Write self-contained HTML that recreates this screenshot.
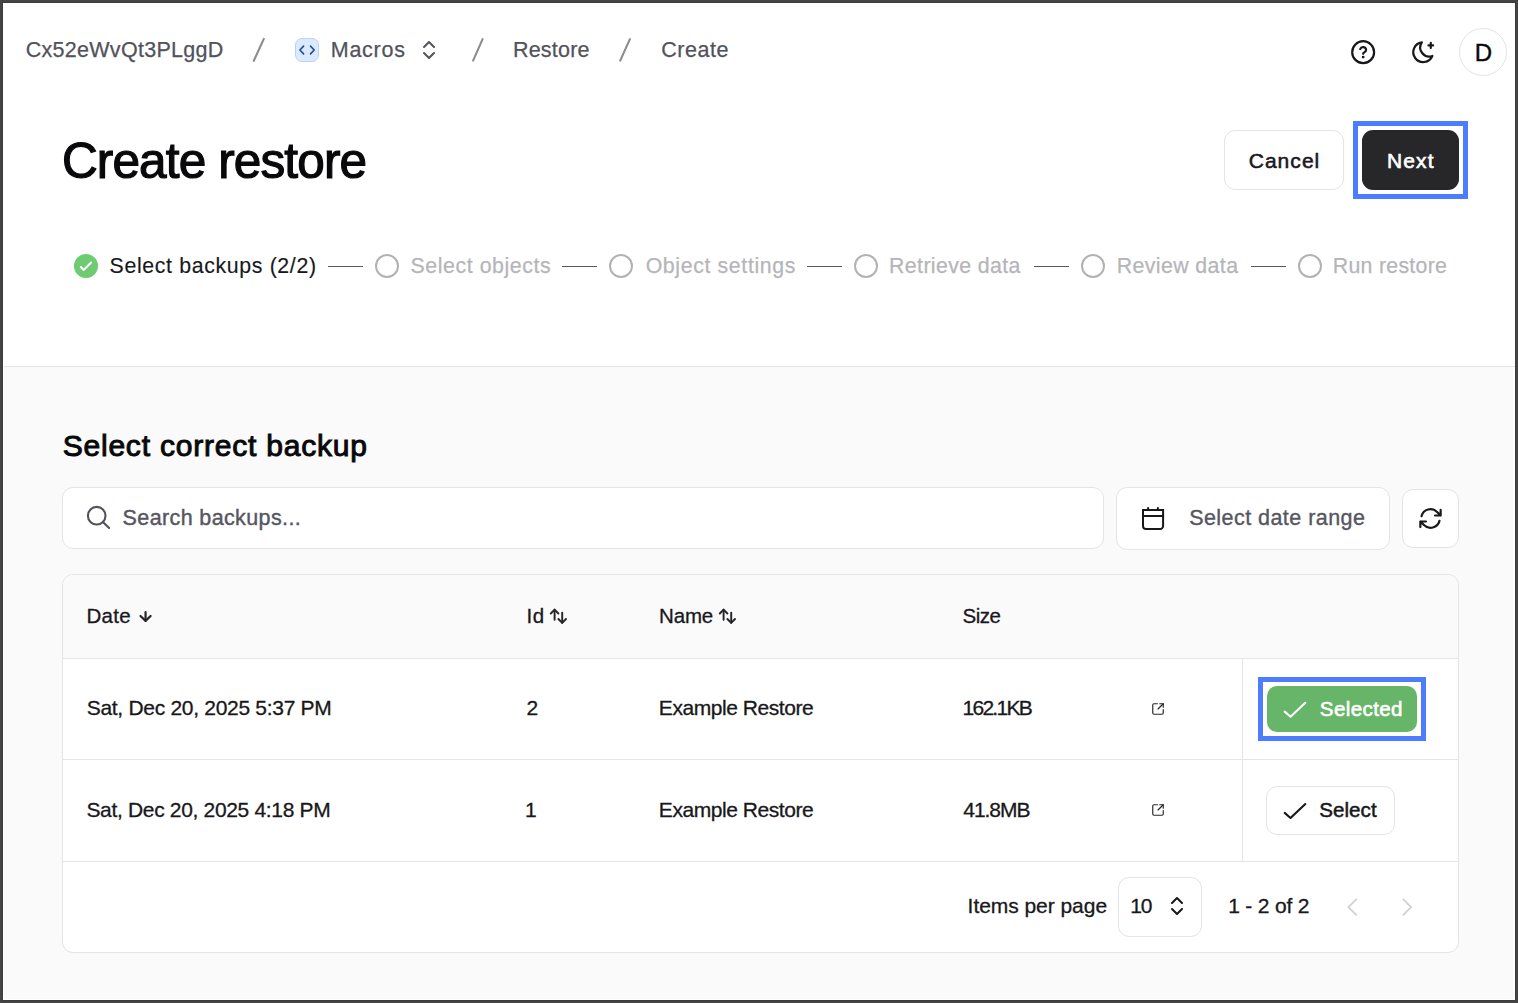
<!DOCTYPE html>
<html lang="en">
<head>
<meta charset="utf-8">
<title>Create restore</title>
<style>
*{box-sizing:border-box;margin:0;padding:0}
html,body{width:1518px;height:1003px;overflow:hidden;background:#444}
body{font-family:"Liberation Sans",sans-serif;-webkit-font-smoothing:antialiased}
#page{position:relative;width:1518px;height:1003px;background:#444;overflow:hidden}
#page>*,.grp>*{position:absolute}
.grp{display:contents}
.t{white-space:nowrap;line-height:1;font-weight:400}
#frame{left:2px;top:2px;width:1514px;height:999px;background:#fff;border:1px solid #3c3c3c}
#top{left:3px;top:3px;width:1512px;height:363px;background:#fff}
#sep{left:4px;top:366px;width:1511px;height:1px;background:#e4e4e7}
#main{left:4px;top:367px;width:1510px;height:632px;background:#fafafa}
.box{background:#fff;border:1px solid #e4e4e7;border-radius:11px}
svg{overflow:visible}
.ic{fill:none;stroke-linecap:round;stroke-linejoin:round}
.ring{border:5px solid #4d7cfe;background:transparent}
.ln{height:1px;background:#5a5a60}

#bc1{left:25.70px;top:40.00px;font-size:21.5px;color:#52525b;letter-spacing:0.286px;-webkit-text-stroke:0.25px #52525b;}
#bc2{left:330.78px;top:40.00px;font-size:21.5px;color:#52525b;letter-spacing:0.731px;-webkit-text-stroke:0.25px #52525b;}
#bc3{left:512.98px;top:40.00px;font-size:21.5px;color:#52525b;letter-spacing:0.211px;-webkit-text-stroke:0.25px #52525b;}
#bc4{left:661.30px;top:40.00px;font-size:21.5px;color:#52525b;letter-spacing:0.543px;-webkit-text-stroke:0.25px #52525b;}
#av{left:1474.83px;top:41.02px;font-size:24px;color:#09090b;letter-spacing:0.000px;-webkit-text-stroke:0.4px #09090b;}
#title{left:61.90px;top:136.00px;font-size:49.5px;color:#09090b;letter-spacing:-0.861px;-webkit-text-stroke:1.2px #09090b;}
#cancel{left:1248.70px;top:150.01px;font-size:21px;color:#18181b;letter-spacing:1.045px;-webkit-text-stroke:0.55px #18181b;}
#next{left:1386.88px;top:150.01px;font-size:21px;color:#ffffff;letter-spacing:1.191px;-webkit-text-stroke:0.6px #ffffff;}
#s1{left:109.56px;top:256.01px;font-size:21.3px;color:#18181b;letter-spacing:0.649px;-webkit-text-stroke:0.15px #18181b;}
#s2{left:410.50px;top:256.01px;font-size:21.3px;color:#b5b5b9;letter-spacing:0.584px;-webkit-text-stroke:0.25px #b5b5b9;}
#s3{left:645.68px;top:256.01px;font-size:21.3px;color:#b5b5b9;letter-spacing:0.635px;-webkit-text-stroke:0.25px #b5b5b9;}
#s4{left:889.06px;top:256.01px;font-size:21.3px;color:#b5b5b9;letter-spacing:0.396px;-webkit-text-stroke:0.25px #b5b5b9;}
#s5{left:1116.68px;top:256.01px;font-size:21.3px;color:#b5b5b9;letter-spacing:0.414px;-webkit-text-stroke:0.25px #b5b5b9;}
#s6{left:1332.78px;top:256.01px;font-size:21.3px;color:#b5b5b9;letter-spacing:0.286px;-webkit-text-stroke:0.25px #b5b5b9;}
#h2{left:62.68px;top:431.00px;font-size:30px;color:#09090b;letter-spacing:0.789px;-webkit-text-stroke:1.0px #09090b;}
#ph{left:122.58px;top:508.00px;font-size:21.5px;color:#56565f;letter-spacing:0.377px;-webkit-text-stroke:0.4px #56565f;}
#dr{left:1189.18px;top:508.00px;font-size:21.5px;color:#56565e;letter-spacing:0.451px;-webkit-text-stroke:0.35px #56565e;}
#th1{left:86.38px;top:606.01px;font-size:20.5px;color:#18181b;letter-spacing:0.316px;-webkit-text-stroke:0.3px #18181b;}
#th2{left:526.60px;top:606.01px;font-size:20.5px;color:#18181b;letter-spacing:0.371px;-webkit-text-stroke:0.3px #18181b;}
#th3{left:659.12px;top:606.01px;font-size:20.5px;color:#18181b;letter-spacing:-0.182px;-webkit-text-stroke:0.3px #18181b;}
#th4{left:962.56px;top:606.01px;font-size:20.5px;color:#18181b;letter-spacing:-0.517px;-webkit-text-stroke:0.3px #18181b;}
#r1a{left:86.70px;top:697.00px;font-size:21px;color:#18181b;letter-spacing:-0.294px;-webkit-text-stroke:0.3px #18181b;}
#r1b{left:526.43px;top:697.00px;font-size:21px;color:#18181b;letter-spacing:0.000px;-webkit-text-stroke:0.3px #18181b;}
#r1c{left:658.84px;top:697.00px;font-size:21px;color:#18181b;letter-spacing:-0.441px;-webkit-text-stroke:0.3px #18181b;}
#r1d{left:962.50px;top:697.00px;font-size:21px;color:#18181b;letter-spacing:-1.733px;-webkit-text-stroke:0.3px #18181b;}
#sel1{left:1319.84px;top:699.02px;font-size:20.6px;color:#ffffff;letter-spacing:0.361px;-webkit-text-stroke:0.6px #ffffff;}
#r2a{left:86.38px;top:799.00px;font-size:21px;color:#18181b;letter-spacing:-0.325px;-webkit-text-stroke:0.3px #18181b;}
#r2b{left:525.03px;top:799.00px;font-size:21px;color:#18181b;letter-spacing:0.000px;-webkit-text-stroke:0.3px #18181b;}
#r2c{left:658.84px;top:799.00px;font-size:21px;color:#18181b;letter-spacing:-0.441px;-webkit-text-stroke:0.3px #18181b;}
#r2d{left:963.30px;top:799.00px;font-size:21px;color:#18181b;letter-spacing:-1.039px;-webkit-text-stroke:0.3px #18181b;}
#sel2{left:1319.20px;top:800.00px;font-size:20.6px;color:#18181b;letter-spacing:0.050px;-webkit-text-stroke:0.5px #18181b;}
#f1{left:967.60px;top:895.01px;font-size:21px;color:#18181b;letter-spacing:-0.047px;-webkit-text-stroke:0.3px #18181b;}
#f2{left:1130.32px;top:895.01px;font-size:21px;color:#18181b;letter-spacing:-1.259px;-webkit-text-stroke:0.3px #18181b;}
#f3{left:1228.24px;top:895.01px;font-size:21px;color:#18181b;letter-spacing:-0.199px;-webkit-text-stroke:0.3px #18181b;}
</style>
</head>
<body>
<div id="page">
<div id="frame"></div>
<header id="top"></header>
<div id="sep"></div>
<main id="main"></main>
<nav class="grp" id="g-bc" aria-label="Breadcrumb">
<svg class="ic" style="left:250px;top:36px" width="18" height="28" viewBox="250 36 18 28" stroke="#8c8c8e" stroke-width="2.1" stroke-linecap="butt"><path d="M263.8 38.9 253.8 60.8"/></svg>
<div id="badge" style="left:295px;top:38px;width:24px;height:24px;border-radius:7px;background:#dbeafe;border:1px solid #b6d2fc"></div>
<svg class="ic" style="left:295px;top:38px" width="24" height="24" viewBox="295 38 24 24" stroke="#1f4b99" stroke-width="1.6" stroke-linecap="butt" stroke-linejoin="miter"><path d="M303.6 46.1 299.9 50l3.7 3.9"/><path d="M310.5 46.1 314.2 50l-3.7 3.9"/></svg>
<svg class="ic" style="left:417px;top:37.6px" width="24" height="24" viewBox="0 0 24 24" stroke="#52525b" stroke-width="2"><path d="m7 15 5 5 5-5"/><path d="m7 9 5-5 5 5"/></svg>
<svg class="ic" style="left:469px;top:36px" width="18" height="28" viewBox="469 36 18 28" stroke="#8c8c8e" stroke-width="2.1" stroke-linecap="butt"><path d="M482.6 39.1 473.1 60.6"/></svg>
<svg class="ic" style="left:616px;top:36px" width="18" height="28" viewBox="616 36 18 28" stroke="#8c8c8e" stroke-width="2.1" stroke-linecap="butt"><path d="M629.9 39.1 620.2 60.6"/></svg>
<span class="t" id="bc1">Cx52eWvQt3PLggD</span>
<span class="t" id="bc2">Macros</span>
<span class="t" id="bc3">Restore</span>
<span class="t" id="bc4">Create</span>
</nav>
<div class="grp" id="g-tr" aria-label="User menu">
<svg class="ic" style="left:1349.85px;top:38.8px" width="26.3" height="26.3" viewBox="0 0 24 24" stroke="#18181b" stroke-width="2"><circle cx="12" cy="12" r="10"/><path d="M9.3 9.2a2.8 2.8 0 0 1 5.4.9c0 1.9-2.7 2.3-2.7 3.4"/><path d="M12 16.5h.01" stroke-width="2.6"/></svg>
<svg class="ic" style="left:1409.8px;top:38.8px" width="26.4" height="26.4" viewBox="0 0 24 24" stroke="#18181b" stroke-width="2"><path d="M10.8 3.08A8.2 8.2 0 0 0 20.313 15.446A9 9 0 1 1 10.8 3.08z"/><path d="M18.9 3.6v4.5"/><path d="M21 5.85h-4.2"/></svg>
<div id="avatar" style="left:1458.7px;top:27.8px;width:48px;height:48px;border-radius:50%;border:1px solid #e4e4e7;background:#fff"></div>
<span class="t" id="av">D</span>
</div>
<div class="grp" id="g-hd" aria-label="Page header">
<div class="box" id="btn-cancel" style="left:1224px;top:130px;width:120px;height:60px"></div>
<div class="ring" style="left:1353px;top:121px;width:115px;height:78px"></div>
<div id="btn-next" style="left:1362px;top:130px;width:97px;height:60px;border-radius:11px;background:#27272a"></div>
<h1 class="t" id="title">Create restore</h1>
<span class="t" id="cancel">Cancel</span>
<span class="t" id="next">Next</span>
</div>
<div class="grp" id="g-st" role="list" aria-label="Steps">
<div style="left:74px;top:254px;width:24px;height:24px;border-radius:50%;background:#6ecb72"></div>
<svg class="ic" style="left:74px;top:254px" width="24" height="24" viewBox="74 254 24 24" stroke="#fff" stroke-width="2.1" stroke-linecap="butt" stroke-linejoin="miter"><path d="M80.9 267.1 83.6 269.9 91.1 262.5"/></svg>
<div class="ln" style="left:328px;top:266px;width:35px"></div>
<svg class="ic" style="left:375.0px;top:254px" width="24" height="24" viewBox="0 0 24 24" stroke="#b2b2b5" stroke-width="2"><circle cx="12" cy="12" r="11"/></svg>
<div class="ln" style="left:562px;top:266px;width:35px"></div>
<svg class="ic" style="left:609.0px;top:254px" width="24" height="24" viewBox="0 0 24 24" stroke="#b2b2b5" stroke-width="2"><circle cx="12" cy="12" r="11"/></svg>
<div class="ln" style="left:807px;top:266px;width:35px"></div>
<svg class="ic" style="left:854.0px;top:254px" width="24" height="24" viewBox="0 0 24 24" stroke="#b2b2b5" stroke-width="2"><circle cx="12" cy="12" r="11"/></svg>
<div class="ln" style="left:1034px;top:266px;width:35px"></div>
<svg class="ic" style="left:1081.0px;top:254px" width="24" height="24" viewBox="0 0 24 24" stroke="#b2b2b5" stroke-width="2"><circle cx="12" cy="12" r="11"/></svg>
<div class="ln" style="left:1251px;top:266px;width:35px"></div>
<svg class="ic" style="left:1298.0px;top:254px" width="24" height="24" viewBox="0 0 24 24" stroke="#b2b2b5" stroke-width="2"><circle cx="12" cy="12" r="11"/></svg>
<span class="t" id="s1">Select backups (2/2)</span>
<span class="t" id="s2">Select objects</span>
<span class="t" id="s3">Object settings</span>
<span class="t" id="s4">Retrieve data</span>
<span class="t" id="s5">Review data</span>
<span class="t" id="s6">Run restore</span>
</div>
<section class="grp" id="g-sr" aria-label="Filters">
<div class="box" id="search" style="left:62px;top:487px;width:1042px;height:62px"></div>
<svg class="ic" style="left:84px;top:503px" width="28" height="28" viewBox="84 503 28 28" stroke="#52525a" stroke-width="2.1"><circle cx="96.7" cy="515.7" r="8.8"/><path d="M102.9 521.9 109.1 528.1"/></svg>
<div class="box" id="daterange" style="left:1116px;top:487px;width:274px;height:63px"></div>
<svg class="ic" style="left:1139px;top:504px" width="28" height="28" viewBox="1139 504 28 28" stroke="#18181b" stroke-width="2"><path d="M1143 510H1163.1V526a3 3 0 0 1-3 3H1146a3 3 0 0 1-3-3Z" stroke-linejoin="miter"/><path d="M1143 516H1163.1"/><path d="M1148.1 508V510"/><path d="M1157.9 508V510"/></svg>
<div class="box" id="refresh" style="left:1402px;top:489px;width:57px;height:59px;border-radius:11px"></div>
<svg class="ic" style="left:1416.5px;top:505px" width="27" height="27" viewBox="0 0 24 24" stroke="#18181b" stroke-width="1.95"><path d="M16.023 9.348h4.992v-.001M2.985 19.644v-4.992m0 0h4.992m-4.993 0 3.181 3.183a8.25 8.25 0 0 0 13.803-3.7M4.031 9.865a8.25 8.25 0 0 1 13.803-3.7l3.181 3.182m0-4.991v4.99"/></svg>
<h2 class="t" id="h2">Select correct backup</h2>
<span class="t" id="ph">Search backups...</span>
<span class="t" id="dr">Select date range</span>
</section>
<section class="grp" id="g-tb" aria-label="Backups">
<div id="table" style="left:62px;top:574px;width:1396.5px;height:378.5px;border:1px solid #e4e4e7;border-radius:11px;background:#fff;overflow:hidden">
  <div style="position:absolute;left:0;top:0;width:100%;height:84px;background:#fafafa;border-bottom:1px solid #e4e4e7"></div>
  <div style="position:absolute;left:0;top:184px;width:100%;height:1px;background:#e4e4e7"></div>
  <div style="position:absolute;left:0;top:286px;width:100%;height:1px;background:#e4e4e7"></div>
  <div style="position:absolute;left:1179px;top:84px;width:1px;height:202px;background:#e4e4e7"></div>
</div>
<svg class="ic" style="left:136px;top:606px" width="20" height="20" viewBox="136 606 20 20" stroke="#27272a" stroke-width="2.2"><path d="M145.55 612.1V620.7"/><path d="M140.5 616 145.55 620.9 150.6 616"/></svg>
<svg class="ic" style="left:548px;top:606px" width="22" height="20" viewBox="548 606 22 20" stroke="#27272a" stroke-width="1.95"><path d="M550.8 613.5 554.6 609.6l3.8 3.9"/><path d="M554.6 609.8V619.8"/><path d="M558.4 619 562.2 622.9l3.8-3.9"/><path d="M562.2 622.7V612.8"/></svg>
<svg class="ic" style="left:717px;top:606px" width="22" height="20" viewBox="548 606 22 20" stroke="#27272a" stroke-width="1.95"><path d="M550.8 613.5 554.6 609.6l3.8 3.9"/><path d="M554.6 609.8V619.8"/><path d="M558.4 619 562.2 622.9l3.8-3.9"/><path d="M562.2 622.7V612.8"/></svg>
<span class="t" id="th1">Date</span>
<span class="t" id="th2">Id</span>
<span class="t" id="th3">Name</span>
<span class="t" id="th4">Size</span>
<span class="t" id="r1a">Sat, Dec 20, 2025 5:37 PM</span>
<span class="t" id="r1b">2</span>
<span class="t" id="r1c">Example Restore</span>
<span class="t" id="r1d">162.1KB</span>
<span class="t" id="r2a">Sat, Dec 20, 2025 4:18 PM</span>
<span class="t" id="r2b">1</span>
<span class="t" id="r2c">Example Restore</span>
<span class="t" id="r2d">41.8MB</span>
</section>
<div class="grp" id="g-rw" aria-label="Row actions">
<svg class="ic" style="left:1151.1px;top:702px" width="14" height="14" viewBox="0 0 24 24" stroke="#27272a" stroke-width="2"><path d="M21 13v6a2 2 0 0 1-2 2H5a2 2 0 0 1-2-2V5a2 2 0 0 1 2-2h6"/><path d="m21 3-9 9"/><path d="M15 3h6v6"/></svg>
<svg class="ic" style="left:1151.1px;top:802.5px" width="14" height="14" viewBox="0 0 24 24" stroke="#27272a" stroke-width="2"><path d="M21 13v6a2 2 0 0 1-2 2H5a2 2 0 0 1-2-2V5a2 2 0 0 1 2-2h6"/><path d="m21 3-9 9"/><path d="M15 3h6v6"/></svg>
<div class="ring" style="left:1258px;top:677px;width:168px;height:64px"></div>
<div id="btn-selected" style="left:1267px;top:686px;width:150px;height:46px;border-radius:10px;background:#66b568"></div>
<svg class="ic" style="left:1280px;top:698px" width="30" height="24" viewBox="1280 698 30 24" stroke="#fff" stroke-width="2.1" stroke-linecap="butt" stroke-linejoin="miter"><path d="M1284.7 711.6 1290.5 716.7 1305.3 702.8"/></svg>
<div class="box" id="btn-select" style="left:1266px;top:786px;width:129px;height:49px"></div>
<svg class="ic" style="left:1280px;top:799px" width="30" height="24" viewBox="1280 799 30 24" stroke="#18181b" stroke-width="2.1" stroke-linecap="butt" stroke-linejoin="miter"><path d="M1284.7 812.9 1290.5 818 1305.3 804.1"/></svg>
<span class="t" id="sel1">Selected</span>
<span class="t" id="sel2">Select</span>
</div>
<footer class="grp" id="g-ft" aria-label="Pagination">
<div class="box" id="pagesize" style="left:1118px;top:877px;width:84px;height:60px"></div>
<svg class="ic" style="left:1164.7px;top:893.9px" width="24" height="24" viewBox="0 0 24 24" stroke="#18181b" stroke-width="2"><path d="m7 15 5 5 5-5"/><path d="m7 9 5-5 5 5"/></svg>
<svg class="ic" style="left:1340px;top:895px" width="24" height="24" viewBox="1340 895 24 24" stroke="#d1d1d5" stroke-width="1.8"><path d="M1356.2 899.3 1348.4 907.1l7.8 7.8"/></svg>
<svg class="ic" style="left:1395px;top:895px" width="24" height="24" viewBox="1395 895 24 24" stroke="#d1d1d5" stroke-width="1.8"><path d="M1403.3 899.3 1411.1 907.1l-7.8 7.8"/></svg>
<span class="t" id="f1">Items per page</span>
<span class="t" id="f2">10</span>
<span class="t" id="f3">1 - 2 of 2</span>
</footer>

</div>
</body>
</html>
